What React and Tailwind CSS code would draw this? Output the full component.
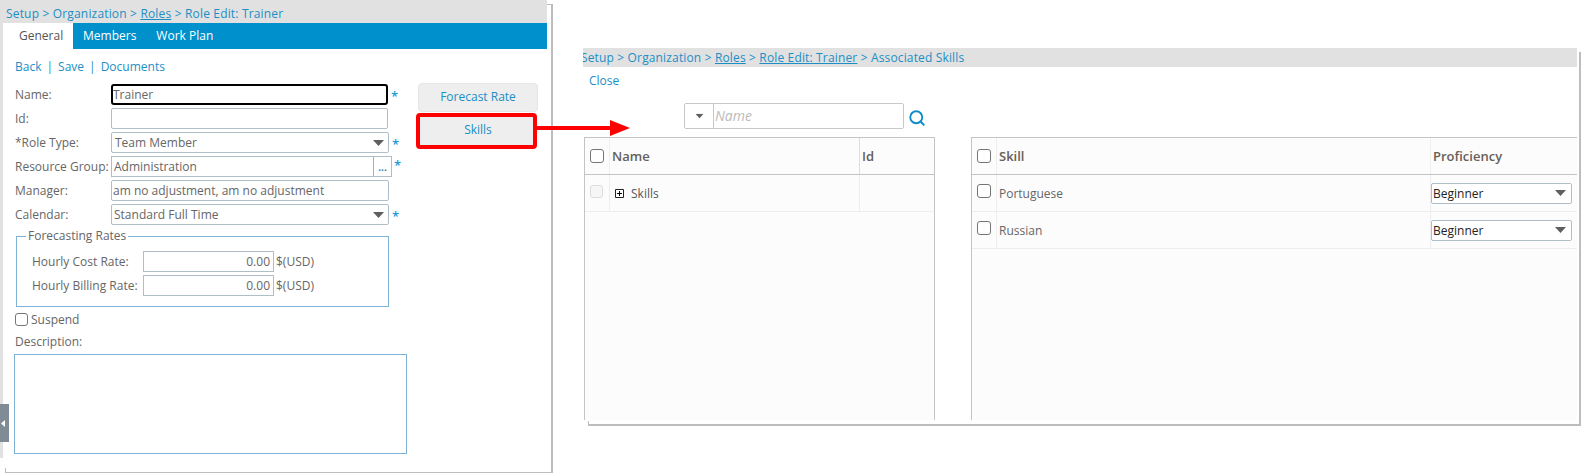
import { Search } from "lucide-react";

const link = "text-[#1b8fc6]";

function Caret({ className }) {
    return (
        <svg width="11" height="6" viewBox="0 0 11 6" className={className}>
            <path d="M0 0h11L5.5 6z" fill="#5f5f5f" />
        </svg>
    );
}

function Star({ className }) {
    return <span className={"text-[13px] leading-[13px] font-semibold text-[#1b9ad6] " + className}>*</span>;
}

function Row({ label, children }) {
    return (
        <div className="flex items-center h-[21px] mb-[3px]">
            <div className="w-[96px] shrink-0 text-[#666]">{label}</div>
            {children}
        </div>
    );
}

function Field({ width, pad, children, caret }) {
    return (
        <div className={"flex items-center justify-between h-[21px] border border-[#afbfca] rounded-[2px] bg-white text-[#666] " + width + " " + pad}>
            <span>{children}</span>
            {caret && <Caret className="mr-[4px]" />}
        </div>
    );
}

function RateRow({ label }) {
    return (
        <div className="flex items-center h-[21px] mb-[3px]">
            <div className="w-[111px] shrink-0 text-[#666]">{label}</div>
            <div className="w-[131px] h-[21px] border border-[#afbfca] pr-[3px] text-right leading-[19px] text-[#666]">0.00</div>
            <span className="ml-[2px] text-[#666]">$(USD)</span>
        </div>
    );
}

function LeftWindow() {
    return (
        <div className="absolute left-0 top-0 w-[553px] h-[473px]">
            <div className="absolute left-[5px] top-[4px] right-0 bottom-0 border-r-2 border-b border-t border-[#bdbdbd]" />
            <div className="absolute left-[5px] bottom-0 h-[5px] border-l border-[#bdbdbd]" />
            <div className="relative w-[547px] h-[458px] flex flex-col bg-white border-l-[3px] border-[#e1e1e1]">
                <div className="h-[23px] -ml-[3px] pl-[6px] bg-[#e1e1e1] leading-[27px] whitespace-nowrap tracking-[0.17px]">
                    <span className={link}>Setup &gt; Organization &gt; <u>Roles</u> &gt; Role Edit: Trainer</span>
                </div>
                <div className="flex h-[26px] bg-[#0090cb] font-medium text-white leading-[26px]">
                    <div className="w-[70px] pl-[16px] bg-white text-[#555]">General</div>
                    <div className="ml-[10px]">Members</div>
                    <div className="ml-[20px]">Work Plan</div>
                </div>
                <div className={"flex h-[35px] items-center pl-[12px] " + link}>
                    <span>Back</span>
                    <span className="mx-[5px]">|</span>
                    <span>Save</span>
                    <span className="mx-[5px]">|</span>
                    <span>Documents</span>
                </div>
                <div className="flex pl-[12px]">
                    <div className="w-[393px] shrink-0">
                        <Row label="Name:">
                            <div className="w-[277px] h-[21px] border-2 border-black rounded-[3px] leading-[17px] text-[#666]">Trainer</div>
                            <Star className="ml-[3px] mt-[3px]" />
                        </Row>
                        <Row label="Id:">
                            <Field width="w-[277px]" pad="" />
                        </Row>
                        <Row label="*Role Type:">
                            <Field width="w-[278px]" pad="pl-[3px]" caret>Team Member</Field>
                            <Star className="ml-[3px] mt-[3px]" />
                        </Row>
                        <Row label="Resource Group:">
                            <div className="flex w-[281px] h-[21px] border border-[#afbfca] text-[#666]">
                                <span className="flex-1 pl-[2px] leading-[19px]">Administration</span>
                                <span className="w-[18px] border-l border-[#8fb8d4] text-center text-[10px] leading-[21px] font-bold text-[#3b7fa8]">...</span>
                            </div>
                            <Star className="ml-[2px] -mt-[3px]" />
                        </Row>
                        <Row label="Manager:">
                            <Field width="w-[278px]" pad="pl-[1px]">am no adjustment, am no adjustment</Field>
                        </Row>
                        <Row label="Calendar:">
                            <Field width="w-[278px]" pad="pl-[2px]" caret>Standard Full Time</Field>
                            <Star className="ml-[3px] mt-[3px]" />
                        </Row>
                        <div className="relative ml-px mt-[11px] w-[373px] h-[71px] border border-[#7fb3d5] pt-[14px] pl-[15px]">
                            <span className="absolute left-[9px] -top-[9px] px-[2px] bg-white text-[#666] leading-[16px]">Forecasting Rates</span>
                            <RateRow label="Hourly Cost Rate:" />
                            <RateRow label="Hourly Billing Rate:" />
                        </div>
                        <div className="flex items-center h-[13px] mt-[6px] text-[#666]">
                            <span className="w-[13px] h-[13px] border border-[#767676] rounded-[3px] bg-white" />
                            <span className="ml-[3px]">Suspend</span>
                        </div>
                        <div className="h-[16px] mt-[8px] leading-[16px] text-[#666]">Description:</div>
                        <div className="w-[393px] h-[100px] mt-[4px] -ml-px border border-[#7fb3d5]" />
                    </div>
                    <div className="ml-[10px] w-[120px] -mt-[1px]">
                        <div className={"h-[29px] rounded-[4px] border border-[#e6e6e6] bg-[#eeeeee] text-center leading-[25px] " + link}>Forecast Rate</div>
                        <div className={"w-[121px] h-[36px] pl-[3px] -ml-[2px] mt-[1px] rounded-[4px] border-4 border-[#fe0000] bg-[#eeeeee] text-center leading-[26px] " + link}>Skills</div>
                    </div>
                </div>
                <div className="absolute -left-[3px] top-[404px] w-[9px] h-[38px] flex items-center bg-[#7f8b95]">
                    <svg width="5" height="7" viewBox="0 0 5 7" className="ml-[1px]"><path d="M4 0v7L0 3.5z" fill="#fff" /></svg>
                </div>
            </div>
        </div>
    );
}

function Checkbox({ disabled, className }) {
    return (
        <span className={(disabled ? "block w-[13px] h-[13px] border border-[#dddddd] rounded-[3px] bg-[#f6f6f6] " : "block w-[14px] h-[14px] border border-[#767676] rounded-[3px] bg-white ") + (className || "")} />
    );
}

function GridRow({ cols, head, children }) {
    return (
        <div className={"grid h-[37px] items-center border-b " + cols + " " + (head ? "border-[#c4c4c4]" : "border-[#eeeeee]")}>
            {children}
        </div>
    );
}

function Cell({ className, children }) {
    return <div className={"flex items-center h-full " + (className || "")}>{children}</div>;
}

function ProficiencySelect() {
    return (
        <div className="flex items-center justify-between w-[141px] h-[21px] pl-[1px] pr-[5px] border border-[#afbfca] rounded-[2px] bg-white text-[#222]">
            <span className="pt-px">Beginner</span>
            <Caret />
        </div>
    );
}

function RightWindow() {
    const leftCols = "grid-cols-[25px_250px_1fr]";
    const rightCols = "grid-cols-[25px_434px_1fr]";
    const headText = "font-semibold text-[13px] text-[#665f58] pt-[2px]";
    return (
        <div className="absolute left-[583px] top-[48px] w-[998px] h-[378px]">
            <div className="absolute left-[5px] top-[4px] right-0 bottom-0 border-r-2 border-b-2 border-[#bdbdbd]" />
            <div className="absolute left-[5px] bottom-0 h-[5px] border-l border-[#bdbdbd]" />
            <div className="relative w-[994px]">
                <div className="h-[19px] bg-[#e1e1e1] overflow-hidden whitespace-nowrap leading-[19px] tracking-[0.15px]">
                    <span className={"-ml-[2px] " + link}>Setup &gt; Organization &gt; <u>Roles</u> &gt; <u>Role Edit: Trainer</u> &gt; Associated Skills</span>
                </div>
                <div className={"h-[28px] pl-[6px] leading-[28px] bg-white " + link}>Close</div>
                <div className="flex items-center mt-[8px] ml-[101px] h-[26px] bg-white">
                    <div className="flex w-[220px] h-[26px] border border-[#c8c8c8] rounded-[2px]">
                        <div className="flex items-center justify-center w-[29px] border-r border-[#c8c8c8]"><Caret className="scale-75" /></div>
                        <div className="pl-[1px] italic text-[#bbb] text-[14px] leading-[24px]">Name</div>
                    </div>
                    <Search size={18} strokeWidth={2.5} className="ml-[4px] mt-[4px] text-[#0b8ccb]" />
                </div>
                <div className="flex mt-[8px] ml-px h-[283px]">
                    <div className="w-[351px] bg-[#fcfcfc] border-x border-t border-[#c4c4c4]">
                        <GridRow cols={leftCols} head>
                            <Cell className="pl-[5px] border-r border-[#eeeeee]"><Checkbox /></Cell>
                            <Cell className={"pl-[2px] border-r border-[#dddddd] " + headText}>Name</Cell>
                            <Cell className={"pl-[2px] " + headText}>Id</Cell>
                        </GridRow>
                        <GridRow cols={leftCols}>
                            <Cell className="pl-[5px] border-r border-[#eeeeee]"><Checkbox disabled className="-mt-[3px]" /></Cell>
                            <Cell className="pl-[5px] border-r border-[#eeeeee] font-medium text-[#555]">
                                <svg width="9" height="9" viewBox="0 0 9 9" className="mr-[7px]">
                                    <path d="M.5.5h8v8h-8z" fill="#fff" stroke="#222" />
                                    <path d="M2 4.5h5M4.5 2v5" stroke="#000" />
                                </svg>
                                <span className="pt-px">Skills</span>
                            </Cell>
                            <Cell />
                        </GridRow>
                    </div>
                    <div className="ml-[36px] flex-1 bg-[#fcfcfc] border-l border-t border-[#c4c4c4]">
                        <GridRow cols={rightCols} head>
                            <Cell className="pl-[5px] border-r border-[#eeeeee]"><Checkbox /></Cell>
                            <Cell className={"pl-[2px] border-r border-[#eeeeee] " + headText}>Skill</Cell>
                            <Cell className={"pl-[2px] " + headText}>Proficiency</Cell>
                        </GridRow>
                        {["Portuguese", "Russian"].map((skill) => (
                            <GridRow cols={rightCols} key={skill}>
                                <Cell className="pl-[5px] border-r border-[#eeeeee]"><Checkbox className="-mt-[4px]" /></Cell>
                                <Cell className="pl-[2px] pt-px border-r border-[#eeeeee] text-[#666]">{skill}</Cell>
                                <Cell><ProficiencySelect /></Cell>
                            </GridRow>
                        ))}
                    </div>
                </div>
            </div>
        </div>
    );
}

export default function App() {
    return (
        <div className="relative w-[1593px] h-[473px] overflow-hidden bg-white text-[12px] font-['Open_Sans',sans-serif]">
            <LeftWindow />
            <RightWindow />
            <svg width="94" height="20" viewBox="0 0 94 20" className="absolute left-[537px] top-[118px]">
                <path d="M0 8h73V2l20 8-20 8v-6H0z" fill="#fe0000" />
            </svg>
        </div>
    );
}
